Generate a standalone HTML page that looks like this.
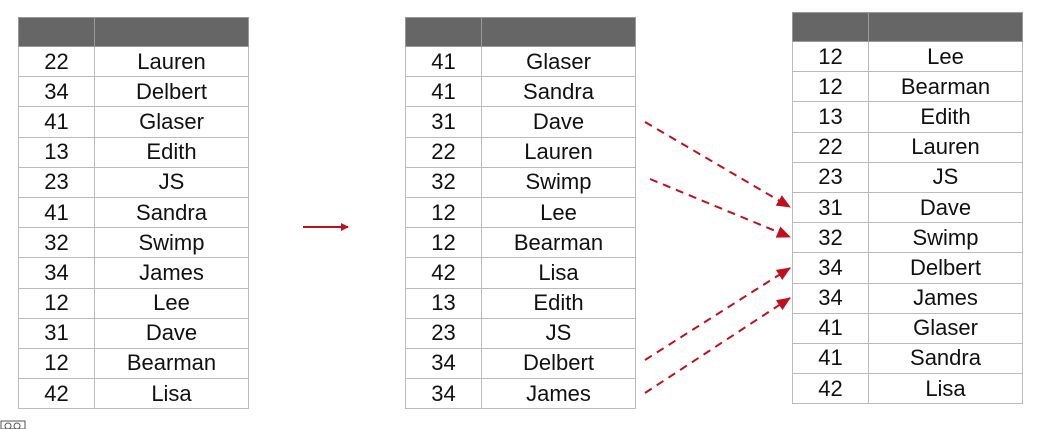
<html><head><style>
body{margin:0;width:1051px;height:429px;background:#fff;position:relative;overflow:hidden;font-family:"Liberation Sans",sans-serif}
.t{position:absolute;width:231px;border-collapse:collapse}
.t td{border:1px solid #bbb;height:30.2px;padding:0;text-align:center;font-size:22px;color:#111;line-height:28px}
.t td:first-child{width:75px}
.t tr.h td{background:#666;border-color:#999;height:29px}
</style></head><body>
<table class="t" style="left:18px;top:17px">
<tr class="h"><td></td><td></td></tr>
<tr><td>22</td><td>Lauren</td></tr><tr><td>34</td><td>Delbert</td></tr><tr><td>41</td><td>Glaser</td></tr><tr><td>13</td><td>Edith</td></tr><tr><td>23</td><td>JS</td></tr><tr><td>41</td><td>Sandra</td></tr><tr><td>32</td><td>Swimp</td></tr><tr><td>34</td><td>James</td></tr><tr><td>12</td><td>Lee</td></tr><tr><td>31</td><td>Dave</td></tr><tr><td>12</td><td>Bearman</td></tr><tr><td>42</td><td>Lisa</td></tr>
</table>
<table class="t" style="left:405px;top:17px">
<tr class="h"><td></td><td></td></tr>
<tr><td>41</td><td>Glaser</td></tr><tr><td>41</td><td>Sandra</td></tr><tr><td>31</td><td>Dave</td></tr><tr><td>22</td><td>Lauren</td></tr><tr><td>32</td><td>Swimp</td></tr><tr><td>12</td><td>Lee</td></tr><tr><td>12</td><td>Bearman</td></tr><tr><td>42</td><td>Lisa</td></tr><tr><td>13</td><td>Edith</td></tr><tr><td>23</td><td>JS</td></tr><tr><td>34</td><td>Delbert</td></tr><tr><td>34</td><td>James</td></tr>
</table>
<table class="t" style="left:792px;top:12px">
<tr class="h"><td></td><td></td></tr>
<tr><td>12</td><td>Lee</td></tr><tr><td>12</td><td>Bearman</td></tr><tr><td>13</td><td>Edith</td></tr><tr><td>22</td><td>Lauren</td></tr><tr><td>23</td><td>JS</td></tr><tr><td>31</td><td>Dave</td></tr><tr><td>32</td><td>Swimp</td></tr><tr><td>34</td><td>Delbert</td></tr><tr><td>34</td><td>James</td></tr><tr><td>41</td><td>Glaser</td></tr><tr><td>41</td><td>Sandra</td></tr><tr><td>42</td><td>Lisa</td></tr>
</table>
<svg width="1051" height="429" style="position:absolute;left:0;top:0">
<defs><marker id="a" markerWidth="8" markerHeight="8" refX="7" refY="4" orient="auto" markerUnits="userSpaceOnUse"><path d="M0,0 L8,4 L0,8z" fill="#c0101e"/></marker>
<marker id="b" markerWidth="14" markerHeight="12" refX="13" refY="6" orient="auto" markerUnits="userSpaceOnUse"><path d="M0,0 L14,6 L0,12z" fill="#c0101e"/></marker></defs>
<line x1="303" y1="227" x2="348" y2="227" stroke="#c0101e" stroke-width="2" marker-end="url(#a)"/>
<g stroke="#c0101e" stroke-width="2" stroke-dasharray="8,6" fill="none">
<line x1="645" y1="122" x2="790" y2="207" marker-end="url(#b)"/>
<line x1="650" y1="179" x2="790" y2="237" marker-end="url(#b)"/>
<line x1="645" y1="360" x2="790" y2="268" marker-end="url(#b)"/>
<line x1="645" y1="393" x2="790" y2="298" marker-end="url(#b)"/>
</g>
<g fill="none" stroke="#555" stroke-width="1"><rect x="1" y="421" width="24" height="8"/><circle cx="8" cy="426" r="3"/><circle cx="17" cy="426" r="3"/></g>
</svg>
</body></html>
